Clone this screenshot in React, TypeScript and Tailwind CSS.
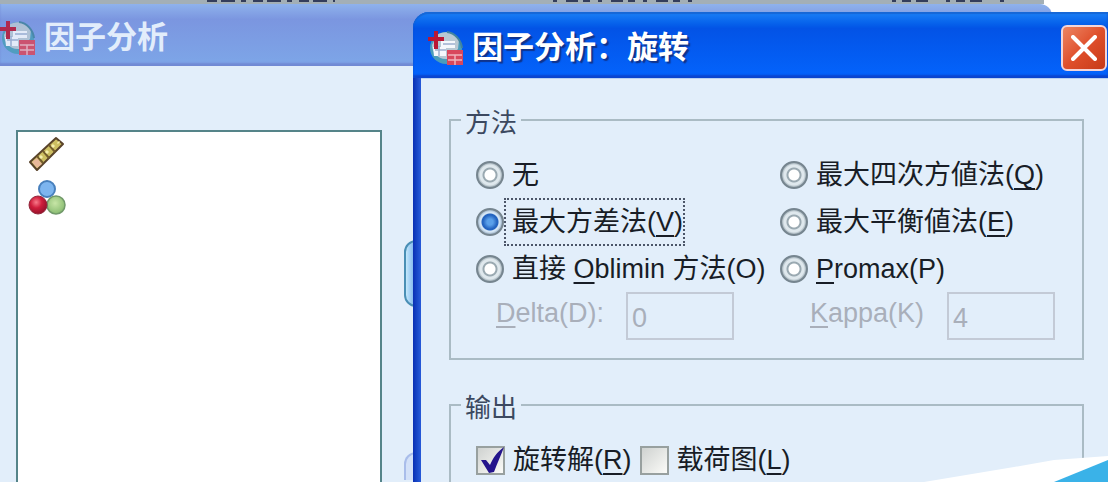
import { useState, type ReactNode } from 'react';
import { clsx } from 'clsx';

interface RadioProps {
  value: string;
  current: string;
  onChange: (value: string) => void;
  children: ReactNode;
}

export default function App() {
  const [method, setMethod] = useState('varimax');

  return (
    <div className="relative flex min-h-screen flex-col overflow-hidden bg-white font-['Liberation_Sans','Noto_Sans_CJK_SC',sans-serif] text-[27px] leading-8 text-[#181d26]">
      <MenuEdge />
      <section className="mr-14 flex flex-1 flex-col">
        <header className="flex h-[62px] shrink-0 items-center gap-2 rounded-tr-xl bg-linear-to-b from-[#8fb2ec] via-[#7b96e0] via-25% to-[#7da6e8] pt-1.5 text-[#e2edfb] shadow-[inset_0_-3px_2px_#7189d4]">
          <AppIcon faded />
          <h1 className="text-[31px] font-bold">因子分析</h1>
        </header>
        <div className="flex flex-1 gap-[22px] bg-[#e2eefa] pt-16 pl-4">
          <ul className="flex w-[366px] flex-col gap-1 border-2 border-b-0 border-[#558489] bg-white pt-1 pl-2.5">
            <li>
              <RulerIcon />
            </li>
            <li>
              <NominalIcon />
            </li>
          </ul>
          <div className="flex flex-col gap-[145px] pt-[110px]">
            <button
              aria-label="Move to variables"
              className="h-[67px] w-14 rounded-xl border-2 border-[#4a8fb5] bg-linear-to-r from-[#c4e8fb] to-[#3f86dc] to-30%"
            />
            <button
              aria-label="Move to selection"
              className="h-7 w-14 rounded-t-xl border-2 border-b-0 border-[#a9bdea] bg-[#d3e1f8]"
            />
          </div>
        </div>
      </section>

      <section
        role="dialog"
        aria-labelledby="dialog-title"
        className="absolute top-3 right-0 bottom-0 left-[413px] flex flex-col rounded-tl-2xl bg-linear-to-r from-[#0a2fb4] to-[#2457d6] to-1%"
      >
        <header className="flex h-[66px] shrink-0 items-center rounded-tl-2xl bg-linear-to-b from-[#1c80f6] via-[#0353e6] via-25% to-[#0464fd] pt-1.5 pr-px pl-[15px] shadow-[inset_0_2px_1px_#1667d6,inset_0_-3px_2px_#0b45cf]">
          <AppIcon />
          <h2
            id="dialog-title"
            className="ml-2 flex-1 text-[31px] font-bold text-white [text-shadow:2px_2px_1px_#10338c]"
          >
            因子分析：旋转
          </h2>
          <button
            aria-label="Close"
            className="flex size-[46px] items-center justify-center rounded-md border-2 border-[#f3d5d8] bg-linear-to-br from-[#ec8462] via-[#df4f2b] to-[#c73a18]"
          >
            <svg viewBox="0 0 26 26" className="size-[26px]" fill="none" stroke="#fff" strokeWidth="4">
              <path d="M2 2L24 24M24 2L2 24" strokeLinecap="round" />
            </svg>
          </button>
        </header>

        <div className="ml-2 flex flex-1 flex-col gap-7 border-t border-[#b9d2f2] bg-[#e2eefa] pt-6 pr-6 pl-7">
          <Group title="方法">
            <div className="grid grid-cols-[304px_1fr] pt-3.5 pb-[18px]">
              <Radio value="none" current={method} onChange={setMethod}>
                无
              </Radio>
              <Radio value="quartimax" current={method} onChange={setMethod}>
                最大四次方値法(<Key>Q</Key>)
              </Radio>
              <Radio value="varimax" current={method} onChange={setMethod}>
                最大方差法(<Key>V</Key>)
              </Radio>
              <Radio value="equamax" current={method} onChange={setMethod}>
                最大平衡値法(<Key>E</Key>)
              </Radio>
              <Radio value="oblimin" current={method} onChange={setMethod}>
                直接 <Key>O</Key>blimin 方法(O)
              </Radio>
              <Radio value="promax" current={method} onChange={setMethod}>
                <Key>P</Key>romax(P)
              </Radio>
              <Param id="delta" value="0" className="pl-5" labelClass="w-[130px]">
                <Key>D</Key>elta(D):
              </Param>
              <Param id="kappa" value="4" className="pl-[30px]" labelClass="w-[137px]">
                <Key>K</Key>appa(K)
              </Param>
            </div>
          </Group>

          <Group title="输出">
            <div className="flex gap-2 pt-[22px] pb-6">
              <Check defaultChecked>
                旋转解(<Key>R</Key>)
              </Check>
              <Check>
                载荷图(<Key>L</Key>)
              </Check>
            </div>
          </Group>
        </div>
      </section>

      <svg
        viewBox="0 0 184 26"
        className="pointer-events-none absolute right-0 bottom-0 h-[26px] w-[184px]"
        aria-hidden="true"
      >
        <path d="M0 26L30 21L90 11L130 4L184 0V26Z" fill="#fff" />
        <path d="M130 26L184 4V26Z" fill="#3ab2e8" />
      </svg>
    </div>
  );
}

function Key({ children }: { children: ReactNode }) {
  return (
    <span className="underline decoration-2 underline-offset-4 [text-decoration-skip-ink:none]">
      {children}
    </span>
  );
}

function Group({ title, children }: { title: string; children: ReactNode }) {
  return (
    <fieldset className="min-w-0 border-2 border-[#aabbc4] px-2.5">
      <legend className="px-1 pt-1.5 text-[26px] leading-7 text-[#3c4960]">{title}</legend>
      <div className="pl-[15px]">{children}</div>
    </fieldset>
  );
}

function Radio({ value, current, onChange, children }: RadioProps) {
  const checked = value === current;
  return (
    <label className="flex h-[47px] items-center whitespace-nowrap">
      <input
        type="radio"
        name="method"
        value={value}
        checked={checked}
        onChange={() => onChange(value)}
        className="size-7 shrink-0 appearance-none rounded-full border-2 border-[#76858f] bg-[radial-gradient(circle,#fff_0_5px,#9aa9b1_6px_7px,#dfe8ed_8px_10px,#a3b1b9_12px)] checked:bg-[radial-gradient(circle,#5aa0ea_0_3px,#2464c0_7px_8px,#d5e6f5_9px_10px,#9fb3c6_12px)]"
      />
      <span
        className={clsx(
          'border-2 border-dotted py-1.5 pl-1.5',
          checked ? 'border-[#4b5568]' : 'border-transparent',
        )}
      >
        {children}
      </span>
    </label>
  );
}

function Param({
  id,
  value,
  className,
  labelClass,
  children,
}: {
  id: string;
  value: string;
  className: string;
  labelClass: string;
  children: ReactNode;
}) {
  return (
    <div className={clsx('flex items-center text-[#a9afba]', className)}>
      <label htmlFor={id} className={clsx('pb-1.5', labelClass)}>
        {children}
      </label>
      <input
        id={id}
        disabled
        defaultValue={value}
        className="h-12 w-[108px] border-2 border-[#c3cad6] bg-transparent px-1 pt-1"
      />
    </div>
  );
}

function Check({ defaultChecked, children }: { defaultChecked?: boolean; children: ReactNode }) {
  return (
    <label className="relative flex items-center gap-2 whitespace-nowrap">
      <input
        type="checkbox"
        defaultChecked={defaultChecked}
        className="peer size-[29px] shrink-0 appearance-none border-2 border-[#98a09f] bg-linear-to-br from-[#cfd2d0] to-[#fbfbf8]"
      />
      <svg
        viewBox="0 0 29 29"
        className="pointer-events-none absolute left-0 hidden size-[29px] peer-checked:block"
      >
        <path d="M5 14L10 14L14 19C17 12 21 6 28 1C25 9 21 18 18 26L13 27Z" fill="#24148c" />
      </svg>
      <span>{children}</span>
    </label>
  );
}

// Bottom edge of the window behind, only the feet of its labels stay visible
function MenuEdge() {
  return (
    <div className="mr-16 h-1 shrink-0 bg-[#a3afb6]">
      <svg viewBox="0 0 1044 4" className="h-1 w-[1044px]" stroke="#333d5c" strokeWidth="2">
        <path d="M207 1H335" strokeDasharray="10 4 14 6 5 7" />
        <path d="M553 1H697" strokeDasharray="4 9 12 5 7 8" />
        <path d="M892 1H1006" strokeDasharray="4 6 9 5 12 18" />
      </svg>
    </div>
  );
}

function AppIcon({ faded }: { faded?: boolean }) {
  return (
    <svg viewBox="0 0 36 38" className={clsx('h-[38px] w-9 shrink-0', faded && 'opacity-85')}>
      <circle cx="18" cy="19" r="16" fill="#4a9dba" />
      <path d="M9 6C16 1 27 3 31 11L30 20L19 30C10 31 4 23 4 16Z" fill="#b8c8d3" />
      <path d="M19 3C27 4 33 11 34 19" stroke="#42849f" strokeWidth="2" fill="none" />
      <path d="M5 18H13V12H27V19H18V27H6Z" fill="#f5f8fc" />
      <path d="M7 21H18M11 17V27M15 15H27" stroke="#9cafce" strokeWidth="1.5" />
      <path d="M8 2V20M0 10H16" stroke="#ba1734" strokeWidth="4" />
      <path d="M19 21H35V36H19Z" fill="#d9475c" />
      <path d="M20 26H34M20 31H34M27 26V36" stroke="#efb2bb" strokeWidth="1.5" />
    </svg>
  );
}

function RulerIcon() {
  return (
    <svg viewBox="0 0 38 38" className="size-[38px]">
      <path d="M2 26L28 2L35 8L9 34Z" fill="#cdbf62" stroke="#59432a" strokeWidth="2" strokeLinejoin="round" />
      <path d="M4 26L9 22L14 28L9 32Z" fill="#e8b89a" />
      <path d="M9 20L15 27M15 15L21 22M21 9L27 16" stroke="#735c2c" strokeWidth="2" />
      <path d="M12 22L14 20M18 17L20 15M24 11L26 9M30 6L31 7" stroke="#f5efad" strokeWidth="3" />
    </svg>
  );
}

function NominalIcon() {
  return (
    <svg viewBox="0 0 40 38" className="h-[38px] w-10">
      <defs>
        <radialGradient id="red" cx="0.4" cy="0.35" r="0.7">
          <stop offset="0" stopColor="#f87a8a" />
          <stop offset="0.45" stopColor="#cf1e3c" />
          <stop offset="1" stopColor="#8e1028" />
        </radialGradient>
        <radialGradient id="green" cx="0.45" cy="0.4" r="0.7">
          <stop offset="0" stopColor="#c7e5a6" />
          <stop offset="1" stopColor="#7fb568" />
        </radialGradient>
      </defs>
      <circle cx="19" cy="11" r="8" fill="#7db5ef" stroke="#4880bd" strokeWidth="2" />
      <circle cx="28" cy="27" r="9" fill="url(#green)" stroke="#71996a" strokeWidth="1.5" />
      <circle cx="10" cy="27" r="9" fill="url(#red)" stroke="#92283c" strokeWidth="1" />
    </svg>
  );
}
